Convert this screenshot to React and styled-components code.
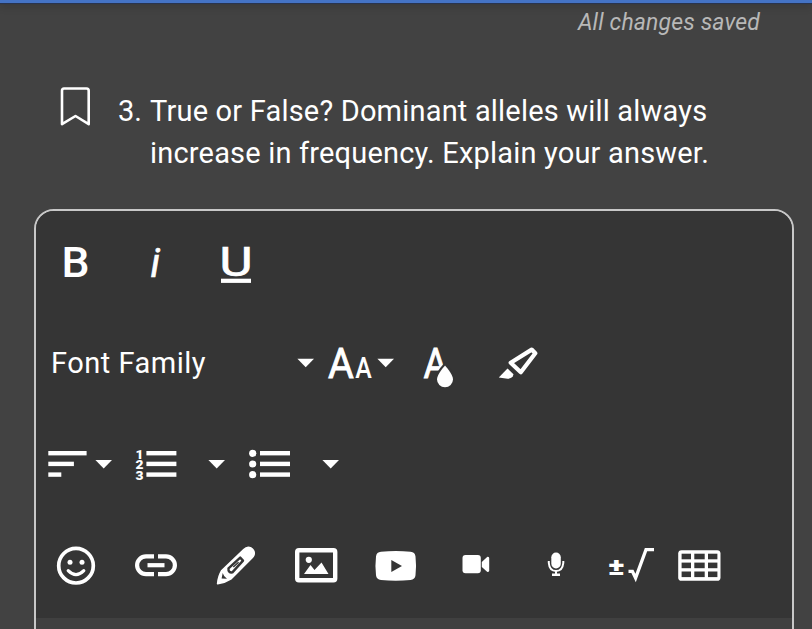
import React from 'react';
import styled, { createGlobalStyle } from 'styled-components';

const surface = '#353535';

const GlobalStyle = createGlobalStyle`
  * {
    box-sizing: border-box;
  }

  body {
    margin: 0;
    background: #424242;
    color: #fff;
    font-family: Roboto, 'Liberation Sans', sans-serif;
    overflow: hidden;
  }
`;

const Page = styled.div`
  display: flex;
  flex-direction: column;
  height: 629px;
  overflow: hidden;
  background: #424242;
`;

const TopBar = styled.div`
  flex: none;
  height: 3px;
  background: #4473c5;
  box-shadow: 0 1px 1px #273350, 0 2px 8px rgba(0, 0, 0, 0.35);
`;

const SaveStatus = styled.p`
  flex: none;
  margin: 6px 52px 0 0;
  height: 28px;
  line-height: 28px;
  text-align: right;
  font-size: 23px;
  font-style: italic;
  letter-spacing: 0.15px;
  color: #b8b8b8;
`;

const Question = styled.div`
  flex: none;
  display: flex;
  align-items: flex-start;
  height: 119px;
  margin-top: 53px;
  padding-left: 59px;
  font-size: 29px;
  line-height: 42px;
`;

const Bookmark = styled.svg`
  flex: none;
  width: 34px;
  height: 42px;
  margin-top: -4px;
`;

const Number = styled.span`
  width: 32px;
  margin-left: 25px;
`;

const Prompt = styled.p`
  margin: 0;
  letter-spacing: 0.19px;
  white-space: nowrap;
`;

const Editor = styled.section`
  flex: none;
  width: 760px;
  height: 500px;
  margin-left: 34px;
  overflow: hidden;
  background: #404040;
  border: 2px solid #c8c8c8;
  border-radius: 20px;
`;

const Toolbar = styled.div`
  height: 407px;
  background: ${surface};
`;

const ToolRow = styled.div`
  display: flex;
  align-items: center;
  height: ${({ $height }) => $height}px;
  padding-left: ${({ $start }) => $start}px;
`;

const ToolButton = styled.button`
  flex: none;
  display: block;
  width: ${({ $width }) => $width}px;
  height: 50px;
  margin: 0 0 0 ${({ $gap }) => $gap || 0}px;
  padding: 0;
  border: 0;
  background: none;
  color: #fff;

  svg {
    display: block;
    overflow: visible;
    font-family: Roboto, 'Liberation Sans', sans-serif;
  }
`;

const FontLabel = styled.span`
  flex: none;
  width: 246px;
  height: 42px;
  line-height: 38px;
  font-size: 29px;
  letter-spacing: 0.5px;
`;

const Tool = ({ label, width, gap, children }) => (
  <ToolButton type="button" aria-label={label} $width={width} $gap={gap}>
    <svg width={width} height="50" viewBox={`0 0 ${width} 50`} fill="currentColor">
      {children}
    </svg>
  </ToolButton>
);

const Caret = ({ gap, top = 20 }) => (
  <Tool label="Open menu" width={18} gap={gap}>
    <path d={`M0.4 ${top}H17L8.7 ${top + 8.5}Z`} />
  </Tool>
);

const Lines = ({ x, widths }) =>
  widths.map((width, i) => (
    <rect key={i} x={x} y={11 + i * 10.7} width={width} height="4.4" />
  ));

const App = () => {
  return (
    <>
      <GlobalStyle />
      <Page>
        <TopBar />
        <SaveStatus>All changes saved</SaveStatus>
        <Question>
          <Bookmark viewBox="0 0 34 42" fill="none" stroke="#fff" strokeWidth="2.6" strokeLinejoin="round">
            <path d="M5 2.5H27.5Q29.7 2.5 29.7 4.7V38.2L16.5 30L3 38.2V4.7Q3 2.5 5 2.5Z" />
          </Bookmark>
          <Number>3.</Number>
          <Prompt>
            True or False? Dominant alleles will always
            <br />
            increase in frequency. Explain your answer.
          </Prompt>
        </Question>
        <Editor>
          <Toolbar>
            <ToolRow $height={104} $start={24}>
              <Tool label="Bold" width={32}>
                <text x="1.5" y="39" fontSize="42" fontWeight="500" textLength="28" lengthAdjust="spacingAndGlyphs">B</text>
              </Tool>
              <Tool label="Italic" width={32} gap={48}>
                <text x="10.5" y="39" fontSize="40" fontStyle="italic" fontWeight="400" stroke="currentColor" strokeWidth="0.7">i</text>
              </Tool>
              <Tool label="Underline" width={32} gap={48}>
                <text x="-0.5" y="38" fontSize="41" fontWeight="400" stroke="currentColor" strokeWidth="0.7" textLength="33" lengthAdjust="spacingAndGlyphs">U</text>
                <rect x="1" y="40.7" width="30" height="4.2" />
              </Tool>
            </ToolRow>
            <ToolRow $height={100} $start={15}>
              <FontLabel>Font Family</FontLabel>
              <Caret top={18.8} />
              <Tool label="Font size" width={48} gap={13}>
                <text x="0" y="38" fontSize="42" fontWeight="400" stroke="currentColor" strokeWidth="0.8" textLength="25.8" lengthAdjust="spacingAndGlyphs">A</text>
                <text x="27.2" y="38" fontSize="29.5" fontWeight="500" textLength="16.5" lengthAdjust="spacingAndGlyphs">A</text>
              </Tool>
              <Caret gap={1} top={18.8} />
              <Tool label="Text colour" width={40} gap={25}>
                <text x="3.5" y="38" fontSize="42" fontWeight="400" stroke="currentColor" strokeWidth="0.8" textLength="24" lengthAdjust="spacingAndGlyphs">A</text>
                <path
                  d="M25 25.4C25 25.4 17 34 17 39.3A8 8 0 0 0 33 39.3C33 34 25 25.4 25 25.4Z"
                  stroke={surface}
                  strokeWidth="4"
                  paintOrder="stroke"
                />
              </Tool>
              <Tool label="Highlight" width={42} gap={38}>
                <path
                  d="M33.7 9.6L37.3 13.2L22.8 32.2L12.7 22.7Z"
                  fill="none"
                  stroke="currentColor"
                  strokeWidth="4.2"
                  strokeLinejoin="round"
                />
                <path d="M0.8 37.5L9.5 28.4L15.5 34.3Q14.5 38.8 9.5 38.7Z" />
              </Tool>
            </ToolRow>
            <ToolRow $height={100} $start={12}>
              <Tool label="Align" width={40}>
                <Lines x={0.3} widths={[38.3, 25.6, 13]} />
              </Tool>
              <Caret gap={7} />
              <Tool label="Numbered list" width={42} gap={23}>
                <g fontSize="12.2" fontWeight="900">
                  <text x="-0.6" y="18.5" textLength="8" lengthAdjust="spacingAndGlyphs">1</text>
                  <text x="-0.6" y="29" textLength="8" lengthAdjust="spacingAndGlyphs">2</text>
                  <text x="-0.6" y="39.5" textLength="8" lengthAdjust="spacingAndGlyphs">3</text>
                </g>
                <Lines x={10.4} widths={[30, 30, 30]} />
              </Tool>
              <Caret gap={30} />
              <Tool label="Bulleted list" width={42} gap={23}>
                <circle cx="3.7" cy="13.3" r="3.6" />
                <circle cx="3.7" cy="24" r="3.6" />
                <circle cx="3.7" cy="34.7" r="3.6" />
                <Lines x={11} widths={[30, 30, 30]} />
              </Tool>
              <Caret gap={31} />
            </ToolRow>
            <ToolRow $height={102} $start={20}>
              <Tool label="Emoji" width={40}>
                <circle cx="20" cy="24.7" r="17.3" fill="none" stroke="currentColor" strokeWidth="3.7" />
                <circle cx="14" cy="21.3" r="2.5" />
                <circle cx="26" cy="21.3" r="2.5" />
                <path d="M12.2 29.7Q20 37.7 27.8 29.7" fill="none" stroke="currentColor" strokeWidth="3.2" strokeLinecap="round" />
              </Tool>
              <Tool label="Link" width={44} gap={38}>
                <g fill="none" stroke="currentColor" strokeWidth="4.2">
                  <path d="M20 15.3H12A8.9 8.9 0 0 0 12 33.1H20" />
                  <path d="M24 15.3H32A8.9 8.9 0 0 1 32 33.1H24" />
                  <path d="M13.5 24.2H30.5" />
                </g>
              </Tool>
              <Tool label="Draw" width={40} gap={38}>
                <path d="M0.8 42.7Q1.5 35 5 29.3L27.2 8Q31 4 35.3 6.3Q40.5 9.8 38.5 14.8Q38 16 36.7 17.3L15.5 38.5Q9 42.7 1.8 43.5Q0.8 43.7 0.8 42.7Z" />
                <path d="M6.7 32L5.6 37.6L11 37.8Q7.8 35.8 6.7 32Z" fill={surface} />
                <path d="M12.5 27.3L24.2 16.6L27 19.6L16.4 31.4Q12 32 12.5 27.3Z" fill="none" stroke={surface} strokeWidth="2.4" strokeLinejoin="round" />
                <path d="M17.3 26L22.6 21.2" stroke={surface} strokeWidth="1.4" />
              </Tool>
              <Tool label="Insert image" width={44} gap={38}>
                <rect x="3.2" y="9.3" width="38" height="30" rx="1.8" fill="none" stroke="currentColor" strokeWidth="4.4" />
                <circle cx="14.8" cy="18.8" r="3.1" />
                <path d="M10 33L16.5 24L20.5 29L27.5 21.5L34.5 33Z" />
              </Tool>
              <Tool label="Insert YouTube video" width={44} gap={36}>
                <path d="M7 10.7Q21.8 9.2 36.5 10.7Q41 11 41.5 15.5Q42.6 25 41.5 34.3Q41 38.6 36.5 39Q21.8 40.3 7 39Q2.5 38.6 2 34.3Q0.9 25 2 15.5Q2.5 11 7 10.7Z" />
                <path d="M17.3 19V31L28 24.9Z" fill={surface} />
              </Tool>
              <Tool label="Record video" width={34} gap={42}>
                <rect x="2.5" y="14" width="18.3" height="18.3" rx="3" />
                <path d="M21.8 21L27.4 15.8Q29.2 15.8 29.2 17V29.5Q29.2 31 27.4 31L21.8 26Z" />
              </Tool>
              <Tool label="Record audio" width={24} gap={50}>
                <rect x="7.3" y="11.6" width="9.5" height="15.8" rx="4.7" />
                <path d="M4.8 20V22Q5.5 30 12 30Q18.5 30 19.3 22V20" fill="none" stroke="currentColor" strokeWidth="2" />
                <path d="M11 30H13V32.6H16V35H8V32.6H11Z" />
              </Tool>
              <Tool label="Insert equation" width={48} gap={40}>
                <text x="0" y="34" fontSize="24" fontWeight="900" textLength="17" lengthAdjust="spacingAndGlyphs">±</text>
                <path d="M20.5 30.3H24.4L27.6 37L38 8.7H46" fill="none" stroke="currentColor" strokeWidth="3.3" />
              </Tool>
              <Tool label="Insert table" width={44} gap={21}>
                <rect x="1.2" y="9.2" width="42.3" height="30.6" rx="3.4" />
                <g fill={surface}>
                  {[12.7, 21.6, 30.5].map((y) => (
                    <React.Fragment key={y}>
                      <rect x="4.6" y={y} width="9.4" height="5.6" />
                      <rect x="17.3" y={y} width="10.4" height="5.6" />
                      <rect x="31" y={y} width="9.4" height="5.6" />
                    </React.Fragment>
                  ))}
                </g>
              </Tool>
            </ToolRow>
          </Toolbar>
        </Editor>
      </Page>
    </>
  );
};

export default App;
